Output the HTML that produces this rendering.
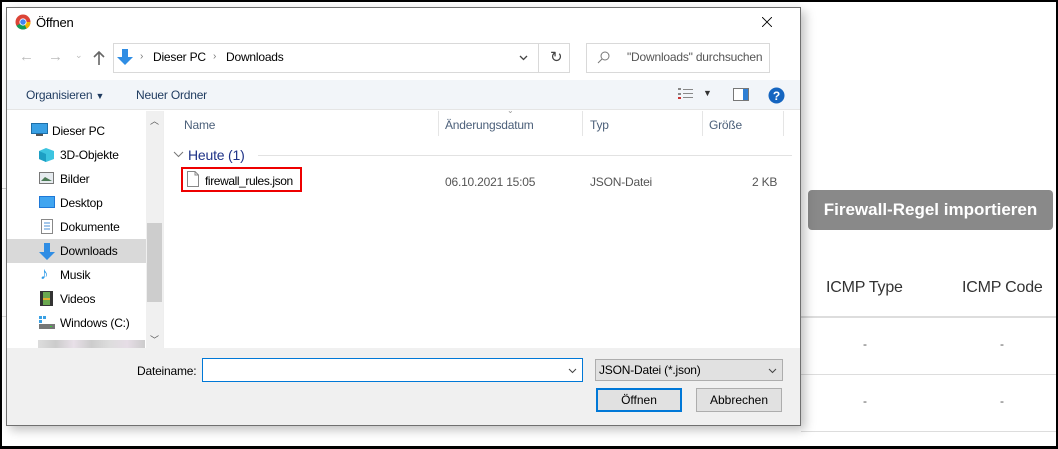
<!DOCTYPE html>
<html><head><meta charset="utf-8"><style>
*{margin:0;padding:0;box-sizing:border-box}
body{width:1058px;height:449px;overflow:hidden;background:#000;font-family:"Liberation Sans",sans-serif;font-size:12px;color:#000;position:relative}
.a{position:absolute}
#page{left:2px;top:2px;width:1054px;height:444px;background:#fff}
.t{position:absolute;white-space:nowrap;letter-spacing:-0.2px}
</style></head><body>
<div id="page" class="a"></div>
<!-- background page -->
<div class="a" style="left:2px;top:188px;width:6px;height:1px;background:#ccc"></div>
<div class="a" style="left:801px;top:316px;width:255px;height:2px;background:#ddd"></div>
<div class="a" style="left:801px;top:374px;width:255px;height:1px;background:#ddd"></div>
<div class="a" style="left:801px;top:431px;width:255px;height:1px;background:#ddd"></div>
<div class="a" style="left:2px;top:316px;width:5px;height:1px;background:#ddd"></div>
<div class="a" style="left:808px;top:190px;width:245px;height:40px;background:#898989;border-radius:4px;color:#fff;font-weight:bold;font-size:17px;text-align:center;line-height:40px;font-family:'Liberation Sans',sans-serif">Firewall-Regel importieren</div>
<div class="t" style="left:826px;top:279px;font-size:16px;color:#333">ICMP Type</div>
<div class="t" style="left:962px;top:279px;font-size:16px;color:#333">ICMP Code</div>
<div class="t" style="left:863px;top:337px;color:#555">-</div>
<div class="t" style="left:1000px;top:337px;color:#555">-</div>
<div class="t" style="left:863px;top:394px;color:#555">-</div>
<div class="t" style="left:1000px;top:394px;color:#555">-</div>

<!-- dialog -->
<div class="a" style="left:6px;top:7px;width:795px;height:419px;background:#fff;border:1px solid #707070;box-shadow:4px 4px 10px rgba(0,0,0,.25)"></div>
<svg class="a" style="left:15px;top:14px" width="16" height="16" viewBox="0 0 16 16"><circle cx="8" cy="8" r="7.5" fill="#db4437"/><path d="M8 8 L1.5 11.7 A7.5 7.5 0 0 0 11.7 14.5Z" fill="#0f9d58"/><path d="M8 8 L11.7 14.5 A7.5 7.5 0 0 0 15.5 8 L8 8Z" fill="#f4b400"/><circle cx="8" cy="8" r="3.6" fill="#fff"/><circle cx="8" cy="8" r="2.8" fill="#4285f4"/></svg>
<div class="t" style="left:36px;top:15px;font-size:13px">Öffnen</div>
<svg class="a" style="left:762px;top:17px" width="10" height="10"><path d="M0 0L10 10M10 0L0 10" stroke="#000" stroke-width="0.9"/></svg>
<div class="t" style="left:19px;top:48px;color:#bbb;font-size:15px">←</div>
<div class="t" style="left:48px;top:48px;color:#bbb;font-size:15px">→</div>
<div class="t" style="left:75px;top:50px;color:#bbb;font-size:9px">⌄</div>
<svg class="a" style="left:93px;top:51px" width="12" height="14"><path d="M6 1V14M1 6L6 1L11 6" stroke="#666" stroke-width="1.6" fill="none"/></svg>
<div class="a" style="left:113px;top:43px;width:457px;height:30px;border:1px solid #d9d9d9"></div>
<div class="a" style="left:538px;top:43px;width:1px;height:30px;background:#d9d9d9"></div>
<svg class="a" style="left:116px;top:48px" width="18" height="18"><path d="M6 1H12V9H17L9 17L1 9H6Z" fill="#2f8de4"/></svg>
<div class="t" style="left:140px;top:51px;color:#777;font-size:10px">›</div>
<div class="t" style="left:153px;top:50px">Dieser PC</div>
<div class="t" style="left:213px;top:51px;color:#777;font-size:10px">›</div>
<div class="t" style="left:226px;top:50px">Downloads</div>
<svg class="a" style="left:519px;top:55px" width="9" height="6"><path d="M1 1L4.5 4.5L8 1" stroke="#444" fill="none" stroke-width="1.3"/></svg>
<div class="t" style="left:550px;top:48px;font-size:15px;color:#444">↻</div>
<div class="a" style="left:586px;top:43px;width:184px;height:30px;border:1px solid #d9d9d9"></div>
<svg class="a" style="left:597px;top:51px" width="13" height="13"><circle cx="8" cy="5" r="4" stroke="#777" fill="none"/><path d="M5 8L1 12" stroke="#777"/></svg>
<div class="t" style="left:627px;top:50px;color:#555">"Downloads" durchsuchen</div>
<div class="a" style="left:7px;top:80px;width:793px;height:30px;background:#f2f5f9;border-bottom:1px solid #e5e5e5"></div>
<div class="t" style="left:26px;top:88px;color:#1e3a5f">Organisieren <span style="font-size:9px">▼</span></div>
<div class="t" style="left:136px;top:88px;color:#1e3a5f">Neuer Ordner</div>
<svg class="a" style="left:678px;top:88px" width="16" height="12"><g fill="#888"><rect x="0" y="0" width="3" height="2"/><rect x="0" y="5" width="3" height="2"/><rect x="0" y="9" width="3" height="2" fill="#c33"/><rect x="5" y="1" width="10" height="1"/><rect x="5" y="5" width="10" height="1"/><rect x="5" y="9" width="10" height="1"/></g></svg>
<div class="t" style="left:703px;top:88px;font-size:9px;color:#333">▼</div>
<svg class="a" style="left:733px;top:88px" width="16" height="13"><rect x="0.5" y="0.5" width="15" height="12" fill="#fff" stroke="#777"/><rect x="10" y="1" width="5" height="11" fill="#2f7fd4"/></svg>
<svg class="a" style="left:768px;top:87px" width="17" height="17"><circle cx="8.5" cy="8.5" r="8" fill="#1565c0"/><text x="8.5" y="13" text-anchor="middle" fill="#fff" font-size="12" font-weight="bold" font-family="Liberation Sans">?</text></svg>
<div class="a" style="left:7px;top:239px;width:139px;height:24px;background:#d9d9d9"></div>
<div class="a" style="left:146px;top:111px;width:17px;height:237px;background:#f0f0f0"></div>
<div class="a" style="left:147px;top:223px;width:15px;height:79px;background:#cdcdcd"></div>
<div class="t" style="left:150px;top:114px;font-size:9px;color:#555">︿</div>
<div class="t" style="left:150px;top:333px;font-size:9px;color:#555">﹀</div>
<div class="a" style="left:163px;top:111px;width:1px;height:237px;background:#eee"></div>
<svg class="a" style="left:31px;top:123px" width="17" height="14"><rect x="0.5" y="0.5" width="16" height="10" fill="#39a0e4" stroke="#1d6fa8"/><rect x="5" y="11" width="7" height="2" fill="#555"/></svg>
<div class="t" style="left:52px;top:124px">Dieser PC</div>
<svg class="a" style="left:38px;top:147px" width="17" height="16"><path d="M8 1L16 4V12L8 15L1 12V4Z" fill="#3cc4e0"/><path d="M8 7V15L1 12V4Z" fill="#1d9fc4"/></svg>
<div class="t" style="left:60px;top:148px">3D-Objekte</div>
<svg class="a" style="left:39px;top:172px" width="15" height="12"><rect x="0.5" y="0.5" width="14" height="11" fill="#e6ebef" stroke="#777"/><path d="M2 9L6 5L13 9Z" fill="#4c7a56"/></svg>
<div class="t" style="left:60px;top:172px">Bilder</div>
<svg class="a" style="left:39px;top:196px" width="16" height="12"><rect width="16" height="12" fill="#1e78d7"/><rect x="1" y="1" width="14" height="10" fill="#40a5f0"/></svg>
<div class="t" style="left:60px;top:196px">Desktop</div>
<svg class="a" style="left:41px;top:219px" width="12" height="15"><rect x="0.5" y="0.5" width="11" height="14" fill="#fff" stroke="#888"/><path d="M3 4H9M3 7H9M3 10H9" stroke="#4a8fd4"/></svg>
<div class="t" style="left:60px;top:220px">Dokumente</div>
<svg class="a" style="left:38px;top:243px" width="18" height="18"><path d="M6 0H12V9H17L9 17L1 9H6Z" fill="#2f8de4"/></svg>
<div class="t" style="left:60px;top:244px">Downloads</div>
<div class="t" style="left:40px;top:264px;font-size:17px;color:#2f9be8">♪</div>
<div class="t" style="left:60px;top:268px">Musik</div>
<svg class="a" style="left:40px;top:291px" width="13" height="15"><rect width="13" height="15" fill="#333"/><rect x="3" y="1" width="7" height="13" fill="#6aa84f"/><rect x="3" y="7" width="7" height="2" fill="#e3b030"/></svg>
<div class="t" style="left:60px;top:292px">Videos</div>
<svg class="a" style="left:39px;top:315px" width="16" height="15"><rect x="0" y="1" width="3" height="3" fill="#39a0e4"/><rect x="4" y="1" width="3" height="3" fill="#39a0e4"/><rect x="0" y="5" width="3" height="3" fill="#39a0e4"/><rect x="0" y="9" width="16" height="5" fill="#777"/><rect x="11" y="11" width="2" height="1" fill="#3c3"/></svg>
<div class="t" style="left:60px;top:316px">Windows (C:)</div>
<div class="a" style="left:38px;top:340px;width:107px;height:8px;background:linear-gradient(90deg,#ddd,#ccc,#e8e0e8,#ccc,#ddd,#e6dde6,#ccc)"></div>
<div class="t" style="left:184px;top:118px;color:#4c607a">Name</div>
<div class="a" style="left:438px;top:111px;width:1px;height:25px;background:#e5e5e5"></div>
<div class="t" style="left:445px;top:118px;color:#4c607a">Änderungsdatum</div>
<div class="t" style="left:507px;top:106px;color:#999;font-size:8px">⌄</div>
<div class="a" style="left:582px;top:111px;width:1px;height:25px;background:#e5e5e5"></div>
<div class="t" style="left:590px;top:118px;color:#4c607a">Typ</div>
<div class="a" style="left:702px;top:111px;width:1px;height:25px;background:#e5e5e5"></div>
<div class="t" style="left:709px;top:118px;color:#4c607a">Größe</div>
<div class="a" style="left:783px;top:111px;width:1px;height:25px;background:#e5e5e5"></div>
<svg class="a" style="left:173px;top:151px" width="11" height="7"><path d="M1 1L5.5 5.5L10 1" stroke="#777" fill="none"/></svg>
<div class="t" style="left:188px;top:147px;color:#1e3287;font-size:14px">Heute (1)</div>
<div class="a" style="left:258px;top:155px;width:534px;height:1px;background:#e2e2e2"></div>
<div class="a" style="left:181px;top:167px;width:121px;height:25px;border:2px solid #e00"></div>
<svg class="a" style="left:187px;top:171px" width="12" height="16"><path d="M0.5 0.5H8L11.5 4V15.5H0.5Z" fill="#fff" stroke="#888"/><path d="M8 0.5V4H11.5" fill="none" stroke="#888"/></svg>
<div class="t" style="left:205px;top:174px;letter-spacing:-0.4px">firewall_rules.json</div>
<div class="t" style="left:445px;top:175px;color:#555">06.10.2021 15:05</div>
<div class="t" style="left:590px;top:175px;color:#555">JSON-Datei</div>
<div class="t" style="left:752px;top:175px;color:#555">2 KB</div>
<div class="a" style="left:7px;top:348px;width:793px;height:77px;background:#f0f0f0"></div>
<div class="t" style="left:137px;top:364px">Dateiname:</div>
<div class="a" style="left:202px;top:358px;width:381px;height:24px;background:#fff;border:1px solid #0078d7"></div>
<svg class="a" style="left:568px;top:368px" width="9" height="6"><path d="M1 1L4.5 4.5L8 1" stroke="#444" fill="none"/></svg>
<div class="a" style="left:595px;top:359px;width:188px;height:22px;background:#e1e1e1;border:1px solid #adadad"></div>
<div class="t" style="left:599px;top:363px">JSON-Datei (*.json)</div>
<svg class="a" style="left:768px;top:368px" width="9" height="6"><path d="M1 1L4.5 4.5L8 1" stroke="#444" fill="none"/></svg>
<div class="a" style="left:596px;top:388px;width:86px;height:24px;background:#e1e1e1;border:2px solid #0078d7;text-align:center;line-height:20px">Öffnen</div>
<div class="a" style="left:696px;top:388px;width:86px;height:24px;background:#e1e1e1;border:1px solid #adadad;text-align:center;line-height:22px">Abbrechen</div>
</body></html>
